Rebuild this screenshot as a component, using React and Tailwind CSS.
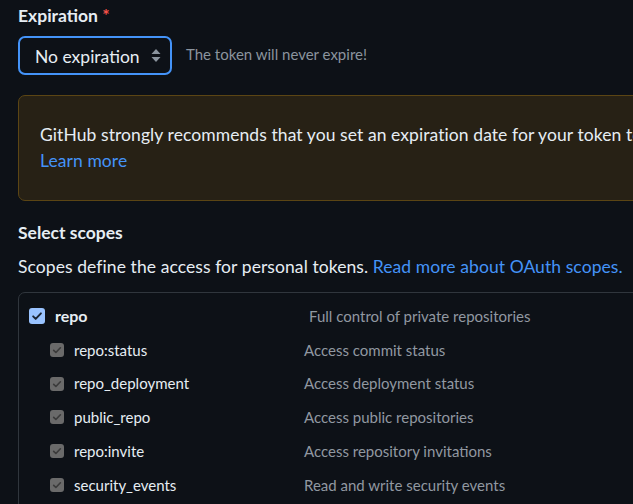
import { useState } from "react";

const scopes = [
  { name: "repo:status", desc: "Access commit status" },
  { name: "repo_deployment", desc: "Access deployment status" },
  { name: "public_repo", desc: "Access public repositories" },
  { name: "repo:invite", desc: "Access repository invitations" },
  { name: "security_events", desc: "Read and write security events" },
];

const Check = ({ color }) => (
  <svg viewBox="0 0 16 16" className="w-full h-full" fill="none">
    <path
      d="M3.6 8.4l2.9 2.9 6-6.3"
      stroke={color}
      strokeWidth="2.2"
      strokeLinecap="round"
      strokeLinejoin="round"
    />
  </svg>
);

export default function App() {
  const [checked] = useState(true);

  return (
    <div
      className="w-[633px] h-[504px] overflow-hidden bg-[#0d1117] pl-[18px] text-[#e6edf3]"
      style={{ fontFamily: "Lato, 'Noto Sans', sans-serif" }}
    >
      {/* expiration begins */}
      <div className="pt-[5px] text-[17.5px] leading-[22px] font-bold">
        Expiration <span className="text-[#f85149]">*</span>
      </div>

      <div className="flex items-center mt-[9px]">
        <div className="flex items-center justify-between w-[154px] h-[39px] border-2 border-[#4493f8] rounded-[7px] pl-[15px] pr-[9px] text-[17.5px]">
          <span className="pt-[3px]">No expiration</span>
          <svg width="10" height="15" viewBox="0 0 10 15">
            <path d="M5 1L9.5 6H0.5Z" fill="#8b949e" />
            <path d="M5 14L9.5 9H0.5Z" fill="#8b949e" />
          </svg>
        </div>
        <span className="ml-[14px] text-[15px] text-[#8b949e] -mt-[3px]">
          The token will never expire!
        </span>
      </div>
      {/* expiration ends */}

      {/* warning begins */}
      <div className="mt-[20px] w-[700px] border border-[#5b4514] bg-[#272115] rounded-[7px] pl-[21px] py-[26px] text-[17.5px] leading-[26px] whitespace-nowrap tracking-[0.08px]">
        <p>
          GitHub strongly recommends that you set an expiration date for your
          token to help keep your information secure.
        </p>
        <a className="text-[#4493f8]">Learn more</a>
      </div>
      {/* warning ends */}

      {/* scopes begins */}
      <h3 className="mt-[21px] text-[17.5px] leading-[22px] font-bold">
        Select scopes
      </h3>
      <p className="mt-[10px] text-[17.5px] leading-[26px] whitespace-nowrap tracking-[0.08px]">
        Scopes define the access for personal tokens.{" "}
        <a className="text-[#4493f8]">Read more about OAuth scopes.</a>
      </p>

      <div className="mt-[12px] w-[700px] h-[260px] border border-[#30363d] rounded-[7px] pt-[6px]">
        <div className="flex items-center h-[34px]">
          <div className="flex items-center w-[290px] pl-[10px]">
            <div className="w-[16px] h-[16px] rounded-[3px] bg-[#99c3ff] p-[1px]">
              {checked && <Check color="#1b2533" />}
            </div>
            <span className="ml-[10px] text-[16px] font-bold">repo</span>
          </div>
          <span className="text-[15px] text-[#9198a1]">
            Full control of private repositories
          </span>
        </div>

        {scopes.map((scope) => (
          <div className="flex items-center h-[33.8px]" key={scope.name}>
            <div className="flex items-center w-[285px] pl-[31px]">
              <div className="w-[14px] h-[14px] rounded-[3px] bg-[#6a6a6a] p-[1px]">
                <Check color="#3b3b3b" />
              </div>
              <span className="ml-[10px] text-[15px]">{scope.name}</span>
            </div>
            <span className="text-[15px] text-[#9198a1]">{scope.desc}</span>
          </div>
        ))}
      </div>
      {/* scopes ends */}
    </div>
  );
}
